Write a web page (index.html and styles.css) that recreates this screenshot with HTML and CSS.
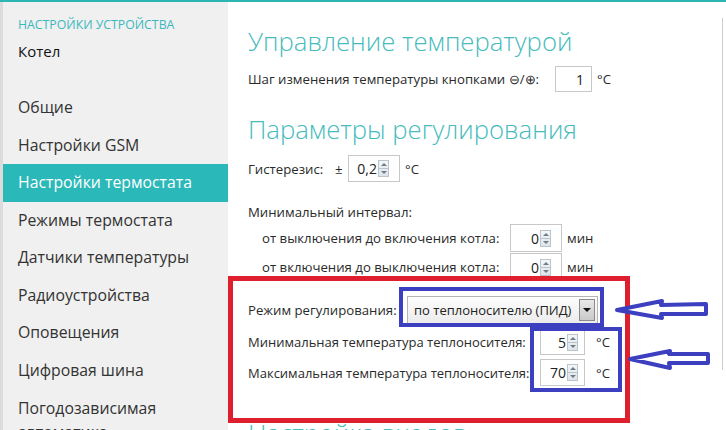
FILE: index.html
```html
<!DOCTYPE html>
<html lang="ru">
<head>
<meta charset="utf-8">
<link rel="stylesheet" href="styles.css">
</head>
<body>
<div class="app">
  <aside class="sidebar">
    <div class="caption">НАСТРОЙКИ УСТРОЙСТВА</div>
    <div class="device">Котел</div>
    <ul class="menu">
      <li>Общие</li>
      <li>Настройки GSM</li>
      <li class="active">Настройки термостата</li>
      <li>Режимы термостата</li>
      <li>Датчики температуры</li>
      <li>Радиоустройства</li>
      <li>Оповещения</li>
      <li>Цифровая шина</li>
      <li class="two">Погодозависимая<br>автоматика</li>
    </ul>
  </aside>
  <main class="main">
    <div class="content">
      <h1 class="h1">Управление температурой</h1>
      <div class="row r-step">
        <span class="lbl">Шаг изменения температуры кнопками ⊖/⊕:</span>
        <span class="box w37"><span class="val">1</span></span>
        <span class="unit">°C</span>
      </div>
      <h2 class="h2">Параметры регулирования</h2>
      <div class="row r-hyst">
        <span class="lbl">Гистерезис:</span>
        <span class="pm">±</span>
        <span class="box w52"><span class="val">0,2</span><span class="spin"><i class="up"></i><i class="dn"></i></span></span>
        <span class="unit">°C</span>
      </div>
      <div class="row r-mi">Минимальный интервал:</div>
      <div class="row r-int1">
        <span class="lbl ind w248">от выключения до включения котла:</span>
        <span class="box w52"><span class="val">0</span><span class="spin"><i class="up"></i><i class="dn"></i></span></span>
        <span class="unit">мин</span>
      </div>
      <div class="row r-int2">
        <span class="lbl ind w248">от включения до выключения котла:</span>
        <span class="box w52"><span class="val">0</span><span class="spin"><i class="up"></i><i class="dn"></i></span></span>
        <span class="unit">мин</span>
      </div>
      <div class="row r-mode">
        <span class="lbl w159">Режим регулирования:</span>
        <span class="select"><span class="sel-text">по теплоносителю (ПИД)</span><span class="sel-btn"><i></i></span></span>
      </div>
      <div class="row r-min">
        <span class="lbl w292">Минимальная температура теплоносителя:</span>
        <span class="box w45"><span class="val">5</span><span class="spin"><i class="up"></i><i class="dn"></i></span></span>
        <span class="unit u2">°C</span>
      </div>
      <div class="row r-max">
        <span class="lbl w292">Максимальная температура теплоносителя:</span>
        <span class="box w45"><span class="val">70</span><span class="spin"><i class="up"></i><i class="dn"></i></span></span>
        <span class="unit u2">°C</span>
      </div>
      <h2 class="h2 h-next">Настройка входов</h2>
    </div>
    <div class="scrollbar"></div>
  </main>
</div>

<div class="mark red"></div>
<div class="mark blue b1"></div>
<div class="mark blue b2"></div>
<svg class="arrows" width="726" height="430" viewBox="0 0 726 430">
  <polygon points="617,310 662,301 661,305 706,304 706,314 661,314 662,318" fill="#fff" stroke="#3b3fc0" stroke-width="4" stroke-linejoin="round"/>
  <polygon points="630,359 670,351 669,354 708,354 708,363 669,363 670,368" fill="#fff" stroke="#3b3fc0" stroke-width="4" stroke-linejoin="round"/>
</svg>
</body>
</html>
```

FILE: styles.css
```css
* { box-sizing: border-box; }
html, body { margin: 0; padding: 0; }
body {
  width: 726px;
  height: 430px;
  overflow: hidden;
  background: #fff;
  font-family: "Open Sans", "Noto Sans", sans-serif;
  color: #333;
  position: relative;
}
.app {
  display: flex;
  height: 430px;
  overflow: hidden;
  border-top: 2px solid #2bb5b5;
}
.sidebar {
  width: 228px;
  flex: none;
  background: #f0f0f0;
  border-left: 3px solid #dcdcdc;
  padding-top: 15px;
}
.caption {
  padding-left: 15px;
  font-size: 12.3px;
  line-height: 16px;
  color: #3bb8bd;
}
.device {
  padding-left: 15px;
  margin-top: 8px;
  font-size: 15px;
  line-height: 20px;
  color: #111;
}
.menu {
  list-style: none;
  margin: 28px 0 0;
  padding: 0;
}
.menu li {
  height: 37.5px;
  line-height: 37.5px;
  padding-left: 15px;
  font-size: 15.8px;
  color: #333;
  white-space: nowrap;
}
.menu li.active {
  background: #2bb8b8;
  color: #fff;
}
.menu li.two {
  height: auto;
  line-height: 24px;
  padding-top: 7px;
}
.main {
  flex: 1;
  display: flex;
  min-width: 0;
}
.content {
  flex: 1;
  padding-left: 20px;
}
.scrollbar {
  width: 4px;
  flex: none;
  margin-top: 16px;
  height: 352px;
  border-left: 1px solid #cfcfcf;
}
.h1, .h2 {
  margin: 0;
  font-weight: 300;
  font-size: 25.7px;
  line-height: 34px;
  color: #47bbbd;
  white-space: nowrap;
}
.h1 { margin-top: 23px; }
.h2 { margin-top: 21px; }
.row {
  display: flex;
  align-items: center;
  font-size: 13.2px;
  white-space: nowrap;
  color: #2a2a2a;
}
.lbl { flex: none; }
.ind { padding-left: 14px; }
.w248 { width: 262px; }
.w159 { width: 159px; }
.w292 { width: 292px; font-size: 13px; }
.r-step { height: 26px; margin-top: 7px; }
.r-step .lbl { width: 307px; }
.r-hyst { height: 27px; margin-top: 8px; }
.r-hyst .lbl { width: 87px; }
.pm { width: 13px; }
.r-mi { height: 20px; margin-top: 20px; }
.r-int1 { height: 28px; margin-top: 2px; }
.r-int2 { height: 28px; margin-top: 1px; }
.r-mode { height: 28px; margin-top: 15px; }
.r-min { height: 26px; margin-top: 5px; }
.r-max { height: 27px; margin-top: 4px; }
.h-next { margin-top: 31px; }

.box {
  display: inline-flex;
  align-items: center;
  justify-content: flex-end;
  height: 100%;
  border: 1px solid #c8c8c8;
  background: #fff;
  padding-right: 3px;
  font-size: 14px;
  color: #222;
}
.w37 { width: 37px; padding-right: 7px; }
.w52 { width: 52px; padding-right: 10px; }
.w45 { width: 45px; padding-right: 6px; }
.spin {
  display: inline-flex;
  flex-direction: column;
  width: 11px;
  height: 17px;
  margin-left: 1px;
  border: 1px solid #b9c4cc;
  background: linear-gradient(#f4f6f8, #dfe4e8);
}
.spin i {
  flex: 1;
  display: flex;
  align-items: center;
  justify-content: center;
}
.spin i.up { border-bottom: 1px solid #b9c4cc; }
.spin i::after {
  content: "";
  width: 0;
  height: 0;
  border-left: 3px solid transparent;
  border-right: 3px solid transparent;
}
.spin i.up::after { border-bottom: 3px solid #6f7d88; }
.spin i.dn::after { border-top: 3px solid #6f7d88; }
.unit { margin-left: 5px; }
.u2 { margin-left: 11px; }

.select {
  display: inline-flex;
  align-items: center;
  width: 191px;
  height: 28px;
  border: 1px solid #b5b5b5;
  background: linear-gradient(#fdfdfd, #ececec);
  padding: 2px 2px 2px 6px;
  font-size: 13px;
  color: #222;
}
.sel-text { flex: 1; }
.sel-btn {
  width: 16px;
  height: 22px;
  border: 1px solid #8a8a8a;
  background: linear-gradient(#e8e8e8, #c9c9c9);
  display: flex;
  align-items: center;
  justify-content: center;
}
.sel-btn i {
  width: 0;
  height: 0;
  border-left: 4px solid transparent;
  border-right: 4px solid transparent;
  border-top: 4px solid #111;
}

.mark {
  position: absolute;
  pointer-events: none;
}
.red {
  left: 228px;
  top: 276px;
  width: 402px;
  height: 147px;
  border: 5px solid #df1f2d;
}
.blue { border: 4px solid #3b3fc0; }
.b1 {
  left: 399px;
  top: 287px;
  width: 205px;
  height: 40px;
}
.b2 {
  left: 530px;
  top: 327px;
  width: 92px;
  height: 65px;
}
.arrows {
  position: absolute;
  left: 0;
  top: 0;
  pointer-events: none;
}
```
